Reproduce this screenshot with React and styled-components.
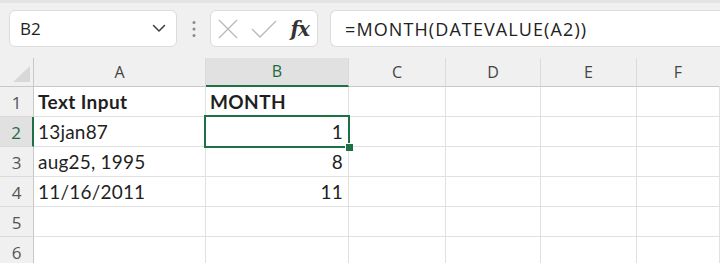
import React from "react";
import styled, { createGlobalStyle } from "styled-components";

const Global = createGlobalStyle`
  html, body { margin: 0; padding: 0; background: #ffffff; overflow: hidden; }
  * { box-sizing: border-box; }
`;

const Page = styled.div`
  width: 720px;
  height: 263px;
  overflow: hidden;
  display: flex;
  flex-direction: column;
  background: #ffffff;
`;

const Toolbar = styled.div`
  height: 58px;
  flex: none;
  background: #f0f0f0;
  border-top: 3px solid #e4e4e4;
  display: flex;
  align-items: flex-start;
  padding: 7px 0 0 9px;
  font-family: "Open Sans", "Noto Sans", sans-serif;
`;

const Box = styled.div`
  height: 37px;
  background: #ffffff;
  border: 1px solid #dcdcdc;
  border-radius: 6px;
  display: flex;
  align-items: center;
  flex: none;
`;

const NameBox = styled(Box)`
  width: 168px;
  padding: 0 10px 0 10px;
  justify-content: space-between;
  font-size: 17px;
  color: #222;
`;

const Dots = styled.div`
  width: 33px;
  height: 37px;
  display: flex;
  align-items: center;
  justify-content: center;
  flex: none;
`;

const FxBox = styled(Box)`
  width: 108px;
  padding: 0 6px 0 7px;
  justify-content: space-between;
`;

const FxText = styled.span`
  font-family: "DejaVu Serif", "Liberation Serif", serif;
  font-style: italic;
  font-weight: bold;
  font-size: 20px;
  color: #333;
  letter-spacing: -1px;
  padding-right: 2px;
`;

const FormulaBox = styled(Box)`
  flex: 1;
  margin-left: 12px;
  margin-right: -20px;
  padding-left: 14px;
  font-size: 18px;
  color: #222;
  letter-spacing: 1.1px;
  border-right: none;
`;

const Grid = styled.div`
  display: grid;
  grid-template-columns: 34px 172px 143px 97px 95px 96px 1fr;
  grid-auto-rows: 30px;
  grid-template-rows: 29px;
  background: #ffffff;
`;

const ColHead = styled.div`
  background: ${p => (p.$active ? "#e1e1e1" : "#f0f0f0")};
  color: ${p => (p.$active ? "#1e6b41" : "#444")};
  border-right: 1px solid ${p => (p.$last ? "transparent" : "#dadada")};
  border-bottom: ${p => (p.$active ? "2px solid #1e7145" : "1px solid #c8c8c8")};
  display: flex;
  align-items: center;
  justify-content: center;
  font-family: "Open Sans", "Noto Sans", sans-serif;
  font-size: 16px;
  padding-bottom: 1px;
`;

const Corner = styled.div`
  background: #f0f0f0;
  border-right: 1px solid #c8c8c8;
  border-bottom: 1px solid #c8c8c8;
  display: flex;
  align-items: flex-end;
  justify-content: flex-end;
  padding: 0 3px 4px 0;
`;

const RowHead = styled.div`
  background: ${p => (p.$active ? "#e1e1e1" : "#f0f0f0")};
  color: ${p => (p.$active ? "#1e6b41" : "#555")};
  border-right: ${p => (p.$active ? "2px solid #1e7145" : "1px solid #c8c8c8")};
  border-bottom: 1px solid #dadada;
  display: flex;
  align-items: flex-end;
  justify-content: center;
  padding-bottom: 2px;
  font-family: "Open Sans", "Noto Sans", sans-serif;
  font-size: 17px;
`;

const Cell = styled.div`
  position: relative;
  border-right: 1px solid #e1e1e1;
  border-bottom: 1px solid #e1e1e1;
  display: flex;
  align-items: flex-end;
  justify-content: ${p => (p.$num ? "flex-end" : "flex-start")};
  padding: 0 ${p => (p.$num ? "5px" : "0")} 3px ${p => (p.$num ? "0" : "4px")};
  font-family: "Lato", "Open Sans", sans-serif;
  font-size: 19px;
  font-weight: ${p => (p.$bold ? 700 : 400)};
  letter-spacing: ${p => (p.$bold ? "0.4px" : "0.2px")};
  color: #1f1f1f;
  white-space: nowrap;
`;

const Selection = styled.div`
  position: absolute;
  z-index: 2;
  left: -2px;
  top: -2px;
  right: -2px;
  bottom: -2px;
  border: 2px solid #1e7145;
  pointer-events: none;
`;

const Handle = styled.div`
  position: absolute;
  right: -5px;
  bottom: -5px;
  width: 8px;
  height: 8px;
  background: #1e7145;
  border-left: 1px solid #ffffff;
  border-top: 1px solid #ffffff;
`;

const cols = ["A", "B", "C", "D", "E", "F"];
const rows = [
  ["Text Input", "MONTH"],
  ["13jan87", "1"],
  ["aug25, 1995", "8"],
  ["11/16/2011", "11"],
  ["", ""],
  ["", ""],
];

export default function App() {
  return (
    <Page>
      <Global />
      <Toolbar>
        <NameBox>
          <span>B2</span>
          <svg width="14" height="9" viewBox="0 0 14 9">
            <path d="M1.5 1.5 L7 7 L12.5 1.5" fill="none" stroke="#444" strokeWidth="1.6" strokeLinecap="round" strokeLinejoin="round" />
          </svg>
        </NameBox>
        <Dots>
          <svg width="4" height="18" viewBox="0 0 4 18">
            <circle cx="2" cy="2.5" r="1.5" fill="#8a8a8a" />
            <circle cx="2" cy="9" r="1.5" fill="#8a8a8a" />
            <circle cx="2" cy="15.5" r="1.5" fill="#8a8a8a" />
          </svg>
        </Dots>
        <FxBox>
          <svg width="20" height="20" viewBox="0 0 20 20">
            <path d="M1 1 L19 19 M19 1 L1 19" stroke="#b8b8b8" strokeWidth="1.3" fill="none" />
          </svg>
          <svg width="26" height="20" viewBox="0 0 26 20">
            <path d="M1 10 L9 18 L25 2" stroke="#b8b8b8" strokeWidth="1.3" fill="none" />
          </svg>
          <FxText>fx</FxText>
        </FxBox>
        <FormulaBox>=MONTH(DATEVALUE(A2))</FormulaBox>
      </Toolbar>
      <Grid>
        <Corner>
          <svg width="17" height="16" viewBox="0 0 17 16">
            <path d="M17 0 L17 16 L0 16 Z" fill="#d8d8d8" />
          </svg>
        </Corner>
        {cols.map((c, i) => (
          <ColHead key={c} $active={c === "B"} $last={i === cols.length - 1}>
            {c}
          </ColHead>
        ))}
        {rows.map((r, ri) => (
          <React.Fragment key={ri}>
            <RowHead $active={ri === 1}>{ri + 1}</RowHead>
            <Cell $bold={ri === 0}>{r[0]}</Cell>
            <Cell $bold={ri === 0} $num={ri > 0}>
              {r[1]}
              {ri === 1 && (
                <Selection>
                  <Handle />
                </Selection>
              )}
            </Cell>
            <Cell />
            <Cell />
            <Cell />
            <Cell />
          </React.Fragment>
        ))}
      </Grid>
    </Page>
  );
}
